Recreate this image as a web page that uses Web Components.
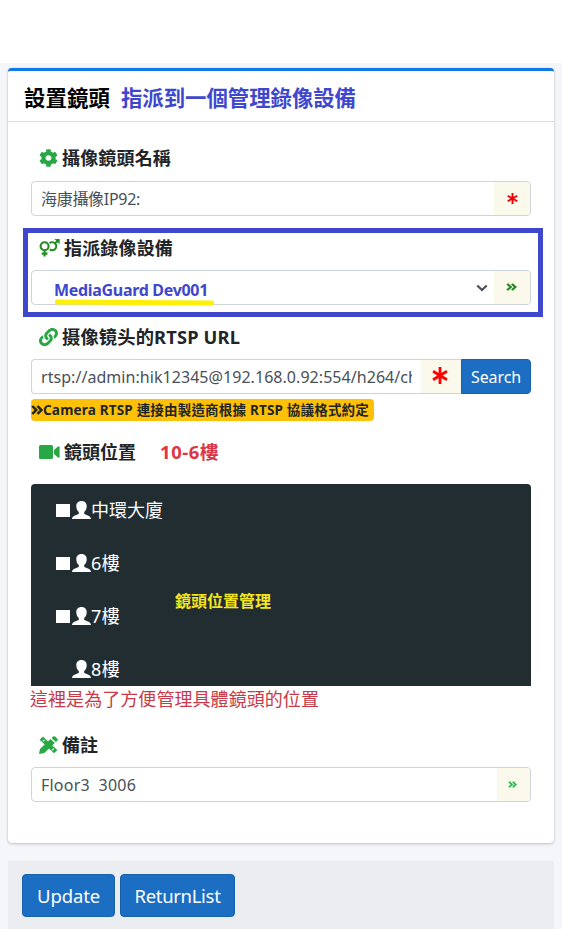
<!DOCTYPE html>
<html lang="zh-Hant">
<head>
<meta charset="utf-8">
<title>設置鏡頭</title>
<style>
html,body{margin:0;padding:0;height:929px;overflow:hidden;background:#fff}
body{font-family:"Noto Sans","Noto Sans CJK TC",sans-serif;color:#212529}
</style>
</head>
<body>
<camera-page></camera-page>
<script>
const GEAR='M487.4 315.7l-42.6-24.6c4.3-23.2 4.3-47 0-70.2l42.6-24.6c4.9-2.8 7.1-8.6 5.5-14-11.1-35.6-30-67.8-54.7-94.6-3.8-4.1-10-5.1-14.8-2.3L380.8 110c-17.9-15.4-38.5-27.3-60.8-35.1V25.8c0-5.6-3.9-10.5-9.4-11.7-36.7-8.2-74.3-7.8-109.2 0-5.5 1.2-9.4 6.1-9.4 11.7V75c-22.2 7.9-42.8 19.8-60.8 35.1L88.7 85.5c-4.9-2.8-11-1.9-14.8 2.3-24.7 26.7-43.6 58.9-54.7 94.6-1.7 5.4.6 11.2 5.5 14L67.3 221c-4.3 23.2-4.3 47 0 70.2l-42.6 24.6c-4.9 2.8-7.1 8.6-5.5 14 11.1 35.6 30 67.8 54.7 94.6 3.8 4.1 10 5.1 14.8 2.3l42.6-24.6c17.9 15.4 38.5 27.3 60.8 35.1v49.2c0 5.6 3.9 10.5 9.4 11.7 36.7 8.2 74.3 7.8 109.2 0 5.5-1.2 9.4-6.1 9.4-11.7v-49.2c22.2-7.9 42.8-19.8 60.8-35.1l42.6 24.6c4.9 2.8 11 1.9 14.8-2.3 24.7-26.7 43.6-58.9 54.7-94.6 1.5-5.5-.7-11.3-5.6-14.1zM256 336c-44.1 0-80-35.9-80-80s35.9-80 80-80 80 35.9 80 80-35.9 80-80 80z';
const LINK='M326.612 185.391c59.747 59.809 58.927 155.698.36 214.59-.11.12-.24.25-.36.37l-67.2 67.2c-59.27 59.27-155.699 59.262-214.96 0-59.27-59.26-59.27-155.7 0-214.96l37.106-37.106c9.84-9.84 26.786-3.3 27.294 10.606.648 17.722 3.826 35.527 9.69 52.721 1.986 5.822.567 12.262-3.783 16.612l-13.087 13.087c-28.026 28.026-28.905 73.66-1.155 101.96 28.024 28.579 74.086 28.749 102.325.51l67.2-67.19c28.191-28.191 28.073-73.757 0-101.83-3.701-3.694-7.429-6.564-10.341-8.569a16.037 16.037 0 0 1-6.947-12.606c-.396-10.567 3.348-21.456 11.698-29.806l21.054-21.055c5.521-5.521 14.182-6.199 20.584-1.731a152.482 152.482 0 0 1 20.522 17.197zM467.547 44.449c-59.261-59.262-155.69-59.27-214.96 0l-67.2 67.2c-.12.12-.25.25-.36.37-58.566 58.892-59.387 154.781.36 214.59a152.454 152.454 0 0 0 20.521 17.196c6.402 4.468 15.064 3.789 20.584-1.731l21.054-21.055c8.35-8.35 12.094-19.239 11.698-29.806a16.037 16.037 0 0 0-6.947-12.606c-2.912-2.005-6.64-4.875-10.341-8.569-28.073-28.073-28.191-73.639 0-101.83l67.2-67.19c28.239-28.239 74.3-28.069 102.325.51 27.75 28.3 26.872 73.934-1.155 101.96l-13.087 13.087c-4.35 4.35-5.769 10.79-3.783 16.612 5.864 17.194 9.042 34.999 9.69 52.721.509 13.906 17.454 20.446 27.294 10.606l37.106-37.106c59.271-59.259 59.271-155.699.001-214.959z';
const ICONS={
 gear:['0 0 512 512',`<path d="${GEAR}"/>`],
 link:['0 0 512 512',`<path d="${LINK}"/>`],
 venusmars:['0 0 21 18','<g fill="none" stroke="currentColor" stroke-width="2.100"><circle cx="5.600" cy="7.200" r="4"/><path d="M5.600 11.200v6.400M2.700 14.600h5.800M10.600 4.200a4 4 0 1 1 .2 6.200M16 4.600l3-3"/></g><path d="M15.400 0h5.300v5.300z"/>'],
 video:['0 0 21 14','<rect width="14" height="14" rx="1.500"/><path d="M15 5 18.600 1.700q2-1.300 2 .6v9.400q0 1.900-2 .6L15 9z"/>'],
 tools:['0 0 18 18','<path d="M.6 3.800 3.800.6l4.800 4.800-3.200 3.200zM9.400 12.600l3.200-3.200 4.800 4.600-3.200 3.300zM0 18l.9-5L10.900 3l4.100 4.100L5 17.100zM11.900 2l1.500-1.400q.9-.8 1.800 0l2.200 2.200q.8.900 0 1.800L16 6.100z"/><path d="M3.600 5.400l1.600-1.600M12.300 14.400l1.700-1.700" stroke="#fff" stroke-width="1"/>'],
 asterisk:['0 0 12 12','<path d="M6 0v12M.8 3l10.400 6M.8 9l10.400-6" fill="none" stroke="currentColor" stroke-width="2.100"/>'],
 chevrons:['0 0 11 10','<path d="M1.200 1 4.800 5 1.200 9M5.900 1l3.600 4-3.600 4" fill="none" stroke="currentColor" stroke-width="2.400"/>'],
 down:['0 0 12 8','<path d="M1.300 1.500 6 6l4.700-4.500" fill="none" stroke="currentColor" stroke-width="2.200"/>'],
 person:['0 0 19 18','<path d="M9.500 0c3.400 0 5.200 2.200 5.200 5.200 0 2.500-1 4.600-2.500 5.800v1.700c1 1.200 6.600 1.600 6.800 5.300H0c.2-3.700 5.800-4.100 6.800-5.300V11C5.300 9.800 4.300 7.700 4.300 5.200 4.300 2.200 6.100 0 9.500 0z"/>']
};
const define=(name,html,init)=>customElements.define(name,class extends HTMLElement{
 constructor(){super();this.attachShadow({mode:'open'})}
 connectedCallback(){this.shadowRoot.innerHTML=html;if(init)init(this,this.shadowRoot)}
});

define('app-icon','<style>:host{display:block;flex:none}svg{display:block;width:100%;height:100%;fill:currentColor}</style><svg preserveAspectRatio="none"></svg>',(el,r)=>{
 const [box,art]=ICONS[el.getAttribute('name')];
 const s=r.querySelector('svg');s.setAttribute('viewBox',box);s.innerHTML=art;
 el.style.width=el.getAttribute('w')+'px';el.style.height=el.getAttribute('h')+'px';
});

/* Single-line text spaced evenly to a given width. */
define('fit-text','<style>:host{display:block;flex:none;white-space:pre}span{display:inline-block}</style><span><slot></slot></span>',(el,r)=>{
 const span=r.querySelector('span'),w=+el.getAttribute('w'),n=[...el.textContent].length;
 span.style.letterSpacing=(w-span.getBoundingClientRect().width)/n+'px';
 el.style.width=w+'px';
});

define('field-label',`<style>:host{display:flex;align-items:center;box-sizing:border-box;height:44px;padding-left:8px;padding-bottom:1px;font-weight:700;font-size:18px;line-height:24px;color:#212529}
::slotted(app-icon){color:#28a745}</style><slot></slot>`);

define('input-group',`<style>:host{display:flex;box-sizing:border-box;height:35px;border:1px solid #ced4da;border-radius:4px;overflow:hidden;background:#fff;color:#495057;font-size:16px;line-height:24px}
.v{flex:1;min-width:0;display:flex;align-items:center;padding-left:9px;overflow:hidden}
</style><div class="v"><slot></slot></div><slot name="end"></slot>`);

define('input-addon',`<style>:host{display:flex;align-items:center;justify-content:center;flex:none;background:#faf9ec;box-sizing:border-box}</style><slot></slot>`);

define('app-button',`<style>:host{display:flex;align-items:center;justify-content:center;flex:none;box-sizing:border-box;background:#1b6ec2;border:1px solid #1861ac;border-radius:4px;color:#fff}</style><slot></slot>`);

define('tree-row',`<style>:host{display:flex;align-items:center;height:24px;padding-left:25px;color:#fff;font-size:18px;line-height:24px}
i{display:block;width:14px;height:13px;background:#fff;margin-right:2px}:host([leaf]) i{visibility:hidden}app-icon{margin-right:0}
</style><i></i><app-icon name="person" w="19" h="18"></app-icon><slot></slot>`);

define('location-tree',`<style>:host{display:flex;flex-direction:column;gap:29px;position:relative;box-sizing:border-box;height:202px;padding-top:14px;background:#222d32;border-radius:4px 4px 0 0;overflow:hidden}
.note{position:absolute;left:144px;top:104.500px;color:#f3e51f;font-weight:700;font-size:16px;line-height:24px}</style>
<tree-row><fit-text w="72">中環大廈</fit-text></tree-row>
<tree-row><fit-text w="29">6樓</fit-text></tree-row>
<tree-row><fit-text w="29">7樓</fit-text></tree-row>
<tree-row leaf><fit-text w="29">8樓</fit-text></tree-row>
<fit-text class="note" w="96">鏡頭位置管理</fit-text>`);

define('camera-card',`<style>
:host{display:block;box-sizing:border-box;height:775px;background:#fff;border-top:3px solid #0f7ae5;border-radius:4px;box-shadow:0 0 1px rgba(0,0,0,.25),0 1px 3px rgba(0,0,0,.2)}
header{display:flex;align-items:center;gap:11px;box-sizing:border-box;height:51px;padding:3px 16px 0;border-bottom:1px solid #dfdfdf;font-weight:700;font-size:21.400px;line-height:30px;color:#000}
.blue{color:#3f48cc}
main{display:flex;flex-direction:column;padding:13px 23px 0}
.first{height:46px;padding-bottom:0}
.assign{position:relative;margin-top:10px}
.frame{position:absolute;left:-8px;right:-12px;top:2px;height:89px;box-sizing:border-box;border:5px solid #3f48cc}
.mark{position:absolute;left:24px;top:74px;width:159px;height:5px;border-radius:2px;background:#fdf006;transform:rotate(.3deg)}
.dev{padding-left:13px;padding-top:4px;color:#3f48cc;font-weight:700}
.down{margin-left:auto;margin-right:6px;color:#495057}
.rtsp{display:flex}
.rtsp input-group{flex:1;border-right:0;border-radius:4px 0 0 4px}
.rtsp app-button{width:70px;border-radius:0 4px 4px 0;font-size:16px;line-height:24px}
.clip{width:371px;overflow:hidden}
.url{margin-top:10px}
.badge{display:flex;align-items:center;align-self:flex-start;box-sizing:border-box;width:343px;height:22px;margin-top:5px;background:#ffc107;border-radius:4px;font-weight:700;font-size:13.500px;line-height:22px}
.loc{height:63px}
.red{color:#dc3545;font-size:18.500px}
.hint{height:28px;line-height:27px;font-size:18px;color:#c93a49;margin-left:-1px}
.memo{margin-top:9px}
</style>
<header><fit-text w="86">設置鏡頭</fit-text><fit-text class="blue" w="235">指派到一個管理錄像設備</fit-text></header>
<main>
<field-label class="first"><app-icon name="gear" w="19" h="18"></app-icon><fit-text w="109" style="margin-left:4px">攝像鏡頭名稱</fit-text></field-label>
<input-group><fit-text w="99">海康攝像IP92:</fit-text><input-addon slot="end" style="width:36px"><app-icon name="asterisk" w="11" h="11" style="color:#f00000"></app-icon></input-addon></input-group>
<section class="assign">
<div class="frame"></div>
<field-label><app-icon name="venusmars" w="21" h="18" style="color:#228b22"></app-icon><fit-text w="109" style="margin-left:4px">指派錄像設備</fit-text></field-label>
<input-group><fit-text class="dev" w="154">MediaGuard Dev001</fit-text><app-icon class="down" name="down" w="12" h="8"></app-icon><input-addon slot="end" style="width:36px"><app-icon name="chevrons" w="11" h="8" style="color:#228b22;margin:0 2px 2px 0"></app-icon></input-addon></input-group>
<div class="mark"></div>
</section>
<field-label class="url"><app-icon name="link" w="19" h="18"></app-icon><fit-text w="178" style="margin-left:4px;font-size:18.300px" lang="zh-Hans">摄像镜头的RTSP URL</fit-text></field-label>
<div class="rtsp"><input-group><div class="clip"><fit-text w="377">rtsp://admin:hik12345@192.168.0.92:554/h264/ch</fit-text></div><input-addon slot="end" style="width:40px"><app-icon name="asterisk" w="16" h="17" style="color:#f00;margin:0 2px 2px 0"></app-icon></input-addon></input-group><app-button><fit-text w="50">Search</fit-text></app-button></div>
<div class="badge"><app-icon name="chevrons" w="12" h="10"></app-icon><fit-text w="326">Camera RTSP 連接由製造商根據 RTSP 協議格式約定</fit-text></div>
<field-label class="loc"><app-icon name="video" w="21" h="14"></app-icon><fit-text w="72" style="margin-left:4px">鏡頭位置</fit-text><fit-text class="red" w="59" style="margin-left:24px">10-6樓</fit-text></field-label>
<location-tree></location-tree>
<div class="hint"><fit-text w="289">這裡是為了方便管理具體鏡頭的位置</fit-text></div>
<field-label class="memo"><app-icon name="tools" w="19" h="18"></app-icon><fit-text w="36" style="margin-left:4px">備註</fit-text></field-label>
<input-group><fit-text w="95">Floor3  3006</fit-text><input-addon slot="end" style="width:33px"><app-icon name="chevrons" w="9" h="7" style="color:#28b550;margin-right:3px"></app-icon></input-addon></input-group>
</main>`);

define('action-bar',`<style>:host{display:flex;gap:5px;box-sizing:border-box;height:68px;margin-top:18px;padding:13px 14px;background:#ebedf1;font-size:18.500px;line-height:26px}
app-button{height:43px}</style>
<app-button style="width:93px"><fit-text w="63">Update</fit-text></app-button><app-button style="width:115px"><fit-text w="86">ReturnList</fit-text></app-button>`);

define('camera-page',`<style>:host{display:block;box-sizing:border-box;width:562px;height:866px;margin-top:63px;padding:5px 8px 0;background:#f4f6f9;overflow:hidden}</style>
<camera-card></camera-card><action-bar></action-bar>`);
</script>
</body>
</html>
